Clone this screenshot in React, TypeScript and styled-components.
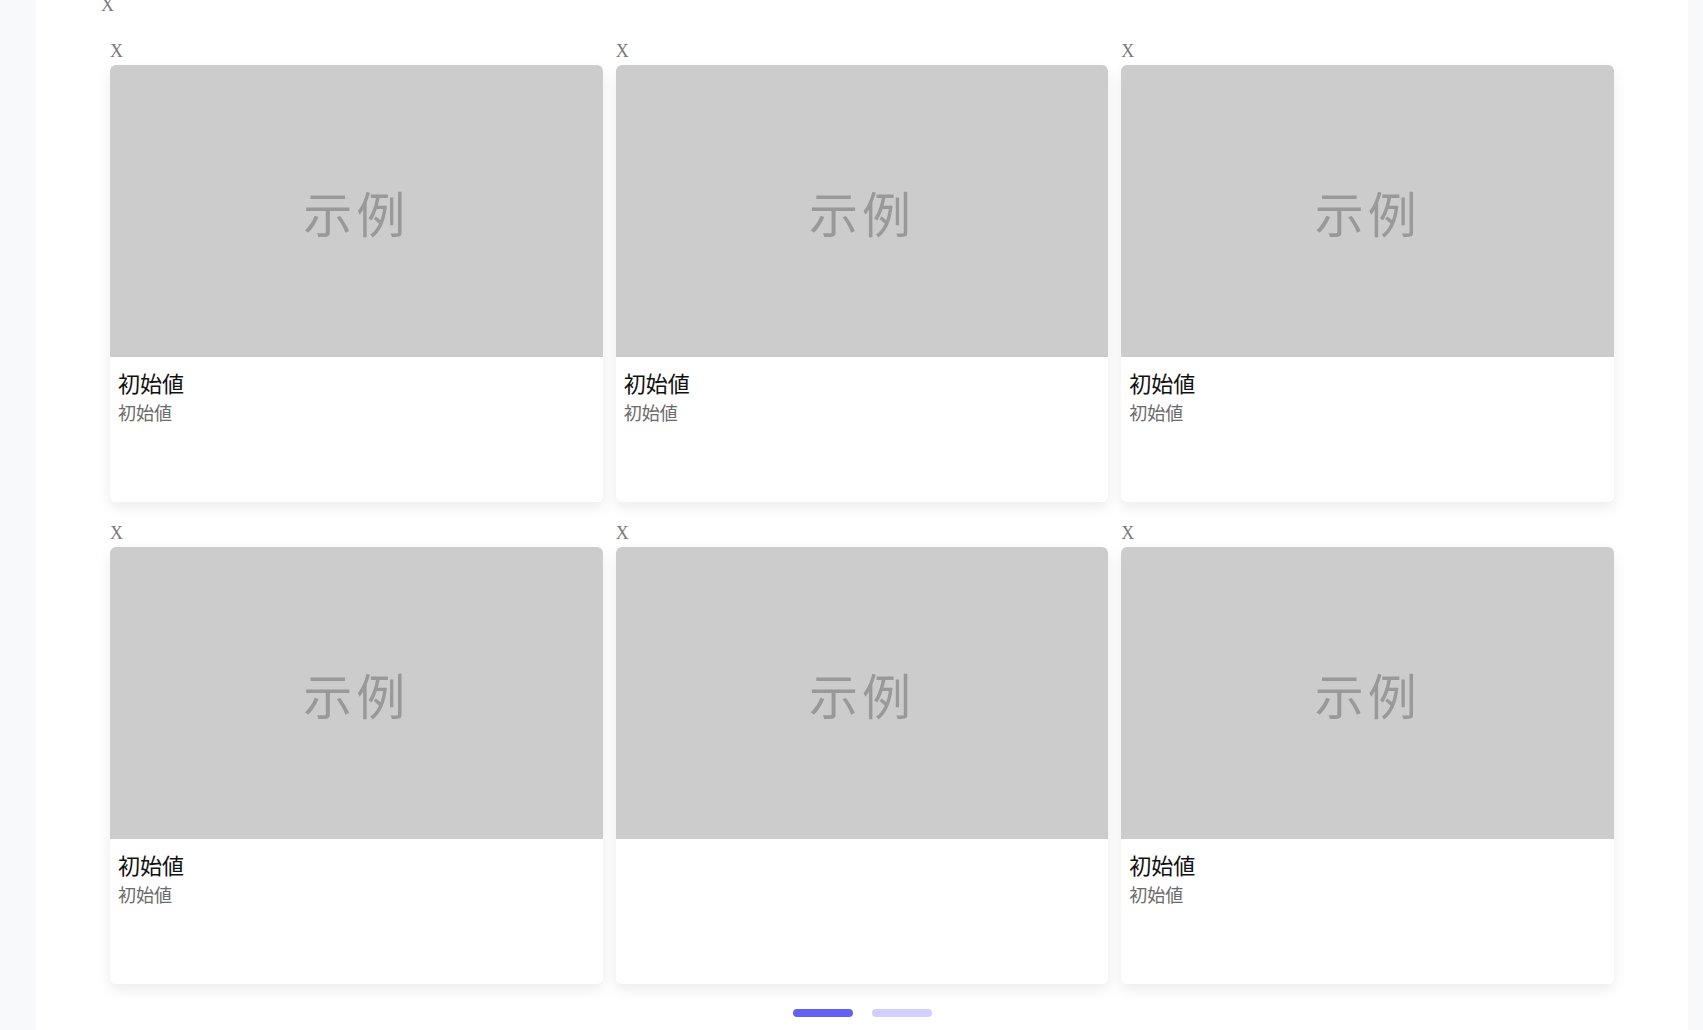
import React from 'react';
import styled, { createGlobalStyle } from 'styled-components';

interface Item {
  title?: string;
  subtitle?: string;
}

const items: Item[] = [
  { title: '初始値', subtitle: '初始値' },
  { title: '初始値', subtitle: '初始値' },
  { title: '初始値', subtitle: '初始値' },
  { title: '初始値', subtitle: '初始値' },
  {},
  { title: '初始値', subtitle: '初始値' },
];

const GlobalStyle = createGlobalStyle`
  html, body {
    margin: 0;
    padding: 0;
    background: #f8f9fb;
    overflow: hidden;
  }
`;

const Page = styled.div`
  display: flex;
  height: 1030px;
  padding: 0 15px 0 36px;
  font-family: 'Noto Sans CJK JP', 'Noto Sans', sans-serif;
`;

const Main = styled.main`
  flex: 1;
  background: #ffffff;
  overflow: hidden;
  padding: 0 74px;
`;

const CloseMark = styled.div<{ $offset?: number }>`
  font-family: 'Liberation Serif', serif;
  font-size: 18px;
  line-height: 20px;
  height: 20px;
  color: #7a7a7a;
  margin-left: ${(p) => p.$offset ?? 0}px;
`;

const TopMark = styled(CloseMark)`
  margin-top: -5px;
`;

const Grid = styled.div`
  display: grid;
  grid-template-columns: repeat(3, 1fr);
  column-gap: 13px;
  row-gap: 21px;
  margin-top: 26px;
`;

const Cell = styled.div`
  display: flex;
  flex-direction: column;
  gap: 4px;
`;

const Card = styled.div`
  height: 437px;
  background: #ffffff;
  border-radius: 6px;
  box-shadow: 0 6px 14px rgba(0, 0, 0, 0.08);
  display: flex;
  flex-direction: column;
  overflow: hidden;
`;

const Thumb = styled.div`
  height: 292px;
  flex-shrink: 0;
  background: #cccccc;
  display: flex;
  align-items: center;
  justify-content: center;
  color: #999999;
  font-family: 'Noto Sans CJK SC', serif;
  font-weight: 400;
  font-size: 49px;
  letter-spacing: 4px;
`;

const Body = styled.div`
  padding: 12px 8px;
  display: flex;
  flex-direction: column;
  gap: 6px;
`;

const Title = styled.div`
  font-size: 22px;
  line-height: 26px;
  color: #111111;
`;

const Subtitle = styled.div`
  font-size: 18px;
  line-height: 22px;
  color: #6b6b6b;
`;

const Pager = styled.div`
  display: flex;
  justify-content: center;
  gap: 19px;
  margin-top: 25px;
`;

const Dot = styled.span<{ $active?: boolean }>`
  width: 60px;
  height: 8px;
  border-radius: 4px;
  background: ${(p) => (p.$active ? '#6360f5' : '#d1d0fc')};
`;

export default function App() {
  return (
    <>
      <GlobalStyle />
      <Page>
        <Main>
          <TopMark $offset={-9}>X</TopMark>
          <Grid>
            {items.map((item, i) => (
              <Cell key={i}>
                <CloseMark>X</CloseMark>
                <Card>
                  <Thumb>示例</Thumb>
                  {item.title && (
                    <Body>
                      <Title>{item.title}</Title>
                      <Subtitle>{item.subtitle}</Subtitle>
                    </Body>
                  )}
                </Card>
              </Cell>
            ))}
          </Grid>
          <Pager>
            <Dot $active />
            <Dot />
          </Pager>
        </Main>
      </Page>
    </>
  );
}
